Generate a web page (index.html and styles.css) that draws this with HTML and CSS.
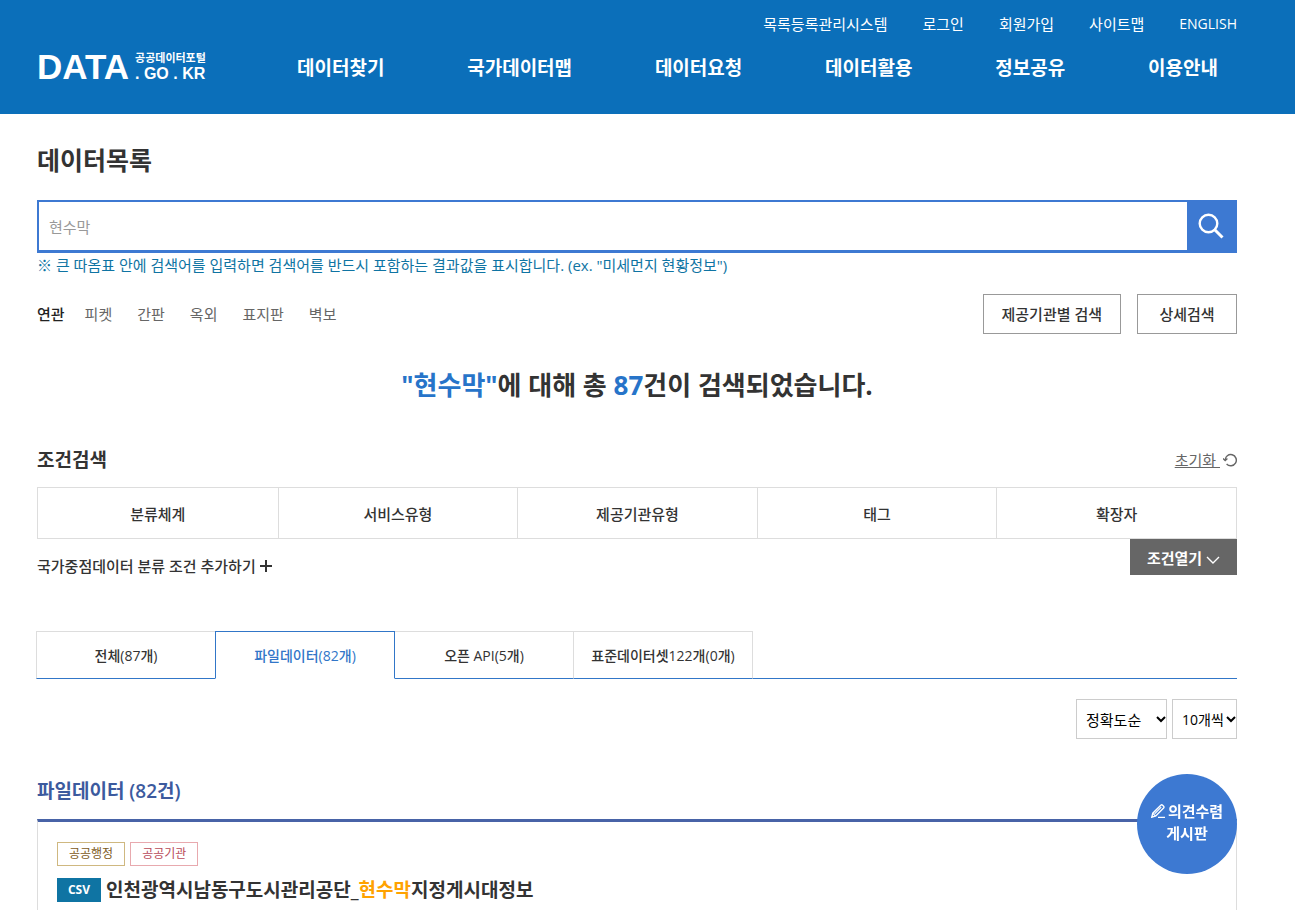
FILE: index.html
```
<!DOCTYPE html>
<html lang="ko">

<head>
  <meta charset="UTF-8">
  <meta name="viewport" content="width=device-width, initial-scale=1.0">
  <title>데이터목록 | 공공데이터포털</title>
  <link rel="stylesheet" href="styles.css">
</head>

<body>
  <header class="header">
    <ul class="util">
      <li><a href="#">목록등록관리시스템</a></li>
      <li><a href="#">로그인</a></li>
      <li><a href="#">회원가입</a></li>
      <li><a href="#">사이트맵</a></li>
      <li><a href="#">ENGLISH</a></li>
    </ul>
    <div class="header-main">
      <a href="#" class="logo">
        <span class="logo-data">DATA</span>
        <span class="logo-side">
          <span class="logo-ko">공공데이터포털</span>
          <span class="logo-domain">. GO . KR</span>
        </span>
      </a>
      <nav class="gnb">
        <a href="#">데이터찾기</a>
        <a href="#">국가데이터맵</a>
        <a href="#">데이터요청</a>
        <a href="#">데이터활용</a>
        <a href="#">정보공유</a>
        <a href="#">이용안내</a>
      </nav>
    </div>
  </header>

  <main class="content">
    <h1 class="page-title">데이터목록</h1>

    <form class="search">
      <input type="text" class="search-input" placeholder="현수막" aria-label="검색어">
      <button type="button" class="search-btn" aria-label="검색">
        <svg width="26" height="26" viewBox="0 0 26 26" fill="none" stroke="currentColor">
          <circle cx="10.5" cy="10.5" r="8.8" stroke-width="2.4" />
          <path d="M17 17l7.5 7.5" stroke-width="3" />
        </svg>
      </button>
    </form>
    <p class="search-note">※ 큰 따옴표 안에 검색어를 입력하면 검색어를 반드시 포함하는 결과값을 표시합니다. (ex. "미세먼지 현황정보")</p>

    <div class="related">
      <strong class="related-title">연관</strong>
      <ul class="related-list">
        <li><a href="#">피켓</a></li>
        <li><a href="#">간판</a></li>
        <li><a href="#">옥외</a></li>
        <li><a href="#">표지판</a></li>
        <li><a href="#">벽보</a></li>
      </ul>
      <div class="related-btns">
        <button type="button" class="btn-line">제공기관별 검색</button>
        <button type="button" class="btn-line">상세검색</button>
      </div>
    </div>

    <p class="result"><em>"현수막"</em>에 대해 총 <em>87</em>건이 검색되었습니다.</p>

    <!-- 조건검색 -->
    <section>
      <div class="filter-head">
        <h2 class="filter-title">조건검색</h2>
        <a href="#" class="reset"><span>초기화&nbsp;</span>
          <svg width="14" height="14" viewBox="0 0 14 14" fill="none" stroke="currentColor" stroke-width="1.4">
            <path d="M2.1 7.2a5.6 5.6 0 1 1 1.5 3.8" />
            <path d="M0 5.4l2.2 2.2 2.2-2.2" />
          </svg>
        </a>
      </div>
      <div class="filter-grid">
        <button type="button">분류체계</button>
        <button type="button">서비스유형</button>
        <button type="button">제공기관유형</button>
        <button type="button">태그</button>
        <button type="button">확장자</button>
      </div>
      <div class="filter-foot">
        <button type="button" class="add-cond">국가중점데이터 분류 조건 추가하기
          <svg width="12" height="12" viewBox="0 0 12 12" stroke="currentColor" stroke-width="2">
            <path d="M0 6h12M6 0v12" />
          </svg>
        </button>
        <button type="button" class="open-cond">조건열기
          <svg width="14" height="8" viewBox="0 0 14 8" fill="none" stroke="currentColor" stroke-width="1.4">
            <path d="M1 1l6 6 6-6" />
          </svg>
        </button>
      </div>
    </section>

    <div class="tabs">
      <button type="button" class="tab">전체(87개)</button>
      <button type="button" class="tab active">파일데이터(82개)</button>
      <button type="button" class="tab">오픈 API(5개)</button>
      <button type="button" class="tab">표준데이터셋122개(0개)</button>
    </div>

    <div class="sort">
      <div class="select">
        <select class="sort-order" aria-label="정렬">
          <option>정확도순</option>
          <option>조회순</option>
        </select>
        <svg width="10" height="7" viewBox="0 0 10 7" fill="none" stroke="#000" stroke-width="2">
          <path d="M1 1l4 4 4-4" />
        </svg>
      </div>
      <div class="select">
        <select class="sort-count" aria-label="목록 개수">
          <option>10개씩</option>
          <option>20개씩</option>
        </select>
        <svg width="10" height="7" viewBox="0 0 10 7" fill="none" stroke="#000" stroke-width="2">
          <path d="M1 1l4 4 4-4" />
        </svg>
      </div>
    </div>

    <h2 class="list-title">파일데이터 (82건)</h2>
    <ul class="list">
      <li>
        <div class="tags">
          <span class="tag tag-gold">공공행정</span>
          <span class="tag tag-pink">공공기관</span>
        </div>
        <a href="#" class="item-title">
          <span class="format">CSV</span>
          <span>인천광역시남동구도시관리공단_<mark>현수막</mark>지정게시대정보</span>
        </a>
      </li>
    </ul>
  </main>

  <a href="#" class="board">
    <span class="board-line">
      <svg width="14" height="14" viewBox="0 0 14 14" fill="none" stroke="currentColor">
        <path d="M.8 13.2l1-4L9.8 1.2q.9-.8 1.8 0l1 1q.8.9 0 1.8L4.8 12z" stroke-width="1.4" />
        <path d="M3.6 9.8l6.6-6.6M1.8 9.4l2.8 2.8M7 13.4h7" stroke-width="1.2" />
      </svg>
      의견수렴
    </span>
    <span>게시판</span>
  </a>
</body>

</html>
```
FILE: styles.css
```
*,
*::before,
*::after {
  box-sizing: border-box;
  margin: 0;
  padding: 0;
}

:root {
  --header: #0b6fba;
  --blue: #3d79d2;
  --line-blue: #3176c8;
  --navy: #4863a7;
  --teal: #0f74a3;
  --text: #333;
  --sub: #666;
  --line: #ddd;
}

body {
  display: flex;
  flex-direction: column;
  min-height: 100vh;
  background-color: #fff;
  color: var(--text);
  font-family: "Open Sans", "Noto Sans CJK KR", sans-serif;
  font-size: 15px;
  line-height: 24px;
}

ul {
  list-style: none;
}

a {
  color: inherit;
  text-decoration: none;
}

button,
input,
select {
  font: inherit;
  color: inherit;
}

button {
  border: none;
  background: none;
  cursor: pointer;
}

/* header */
.header {
  padding: 12px 58px 26px 37px;
  background-color: var(--header);
  color: #fff;
}

.util {
  display: flex;
  justify-content: flex-end;
  gap: 35px;
  font-size: 15px;
}

.util li:last-child {
  font-size: 14px;
}

.header-main {
  display: flex;
  align-items: center;
  height: 40px;
  margin-top: 12px;
}

.logo {
  display: flex;
  gap: 6px;
  width: 260px;
  padding-bottom: 2px;
  font-family: "Liberation Sans", "Noto Sans CJK KR", sans-serif;
  font-weight: 700;
}

.logo-data {
  font-size: 35px;
  line-height: 32px;
}

.logo-side {
  display: flex;
  flex-direction: column;
}

.logo-ko {
  font-size: 11px;
  line-height: 14px;
}

.logo-domain {
  font-size: 16px;
  line-height: 18px;
}

.gnb {
  display: flex;
  flex: 1;
  justify-content: space-between;
  padding-right: 19px;
  font-size: 19px;
  font-weight: 700;
}

/* search */
.content {
  display: flex;
  flex-direction: column;
  flex: 1;
  padding: 28px 58px 0 37px;
}

.page-title {
  font-size: 25px;
  line-height: 36px;
}

.search {
  display: flex;
  height: 53px;
  margin-top: 22px;
  border: 2px solid var(--blue);
  border-bottom-width: 3px;
}

.search-input {
  flex: 1;
  min-width: 0;
  padding: 2px 10px 0;
  border: none;
  outline: none;
}

.search-input::placeholder {
  color: #999;
}

.search-btn {
  display: grid;
  place-items: center;
  width: 48px;
  background-color: var(--blue);
  color: #fff;
}

.search-note {
  color: var(--teal);
}

.related {
  display: flex;
  align-items: center;
  margin-top: 17px;
}

.related-title {
  font-weight: 500;
  color: #222;
}

.related-list {
  display: flex;
  gap: 25px;
  margin-left: 20px;
  color: var(--sub);
}

.related-btns {
  display: flex;
  gap: 16px;
  margin-left: auto;
}

.btn-line {
  min-width: 100px;
  height: 40px;
  padding: 0 18px;
  border: 1px solid #999;
  font-weight: 500;
}

.result {
  margin-top: 31px;
  font-size: 26px;
  font-weight: 700;
  line-height: 40px;
  text-align: center;
}

.result em {
  color: #2774c9;
  font-style: normal;
}

/* filter */
.filter-head {
  display: flex;
  align-items: center;
  justify-content: space-between;
  margin-top: 41px;
}

.filter-title {
  font-size: 19px;
  line-height: 28px;
}

.reset {
  display: flex;
  align-items: center;
  gap: 3px;
  color: var(--sub);
}

.reset span {
  text-decoration: underline;
}

.filter-grid {
  display: grid;
  grid-template-columns: repeat(5, 1fr);
  height: 52px;
  margin-top: 13px;
  border: 1px solid var(--line);
}

.filter-grid button {
  padding-top: 2px;
  font-weight: 500;
}

.filter-grid button + button {
  border-left: 1px solid var(--line);
}

.filter-foot {
  display: flex;
  align-items: flex-start;
  justify-content: space-between;
}

.add-cond {
  padding-top: 15px;
  font-weight: 500;
}

.open-cond {
  height: 36px;
  padding: 2px 17px 0;
  background-color: #666;
  color: #fff;
  font-weight: 700;
}

/* tabs */
.tabs {
  display: flex;
  margin-top: 53px;
  border-bottom: 1px solid var(--line-blue);
}

.tab {
  width: 180px;
  height: 48px;
  margin: 0 0 -1px -1px;
  padding-top: 2px;
  border: 1px solid var(--line);
  border-bottom-color: var(--line-blue);
  font-size: 14px;
  font-weight: 500;
}

.tab.active {
  z-index: 1;
  border-color: var(--line-blue);
  border-bottom-color: #fff;
  color: var(--line-blue);
}

.sort {
  display: flex;
  justify-content: flex-end;
  gap: 5px;
  margin-top: 20px;
}

.select {
  position: relative;
}

.select select {
  height: 40px;
  padding: 2px 0 0 9px;
  border: 1px solid #ccc;
  border-radius: 0;
  background-color: #fff;
  color: #000;
  appearance: none;
}

.select svg {
  position: absolute;
  top: 17px;
  right: 1px;
  pointer-events: none;
}

.sort-order {
  width: 91px;
}

.sort-count {
  width: 65px;
  font-size: 14px;
}

/* list */
.list-title {
  margin-top: 38px;
  color: #3c5a9e;
  font-size: 19px;
  font-weight: 600;
  line-height: 28px;
}

.list {
  flex: 1;
  margin-top: 14px;
  padding: 20px 19px 0;
  border: 1px solid var(--line);
  border-top: 3px solid var(--navy);
  border-bottom: none;
}

.tags {
  display: flex;
  gap: 5px;
}

.tag {
  padding: 0 11px;
  border: 1px solid;
  font-size: 12px;
  line-height: 22px;
}

.tag-gold {
  border-color: #cfb880;
  color: #7d5a1b;
}

.tag-pink {
  border-color: #e8a9ae;
  color: #b94a59;
}

.item-title {
  display: flex;
  align-items: center;
  gap: 5px;
  margin-top: 12px;
  font-size: 19px;
  font-weight: 700;
}

.item-title mark {
  background: none;
  color: #ffa200;
}

.format {
  width: 44px;
  background-color: var(--teal);
  color: #fff;
  font-size: 12px;
  text-align: center;
}

/* floating board button */
.board {
  position: fixed;
  right: 58px;
  bottom: 36px;
  z-index: 2;
  display: flex;
  flex-direction: column;
  align-items: center;
  justify-content: center;
  width: 100px;
  height: 100px;
  padding-bottom: 4px;
  border-radius: 50%;
  background-color: var(--blue);
  color: #fff;
  font-weight: 700;
  line-height: 22px;
}

.board-line {
  display: flex;
  align-items: center;
  gap: 3px;
}
```
